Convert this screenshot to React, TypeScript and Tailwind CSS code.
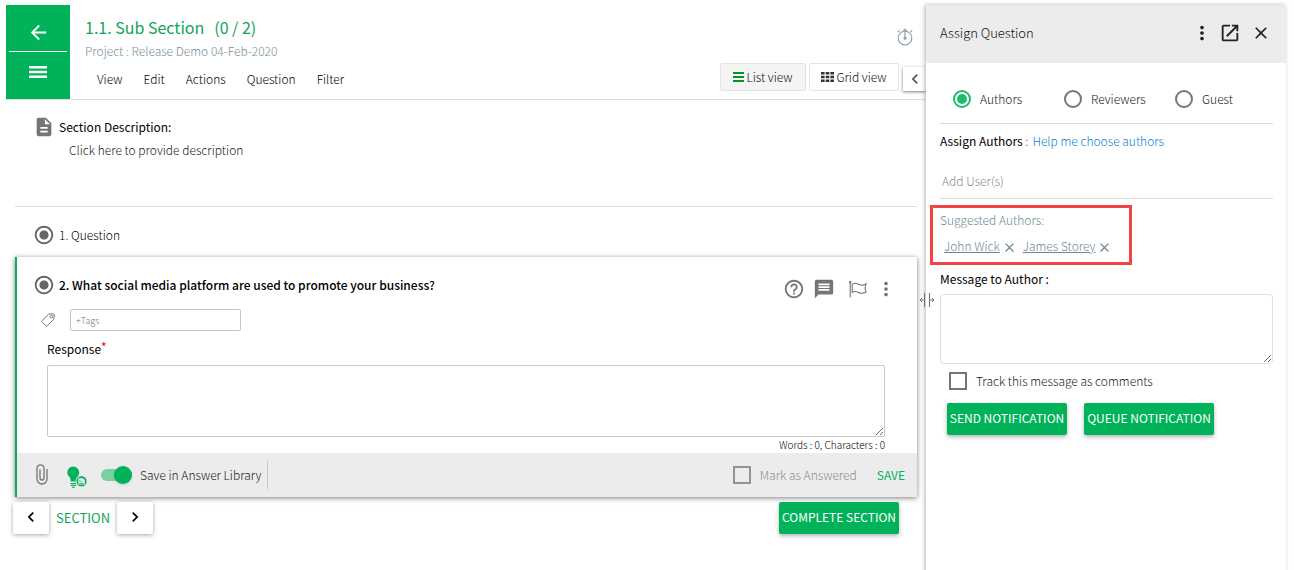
import React from 'react';
import {
  MdArrowBack,
  MdChevronLeft,
  MdChevronRight,
  MdClose,
  MdDescription,
  MdHelpOutline,
  MdMessage,
  MdMoreVert,
  MdOpenInNew,
  MdRadioButtonChecked,
} from 'react-icons/md';

const MENU_ITEMS = ['View', 'Edit', 'Actions', 'Question', 'Filter'];
const ROLES = ['Authors', 'Reviewers', 'Guest'];
const SUGGESTED = ['John Wick', 'James Storey'];

const MenuIcon = () => (
  <svg width="18" height="12" viewBox="0 0 18 12" fill="currentColor">
    <path d="M0 0h18v2.4H0zM0 4.8h18v2.4H0zM0 9.6h18V12H0z" />
  </svg>
);

const TimerIcon = () => (
  <svg width="16" height="18" viewBox="0 0 16 18" fill="none" stroke="#90a4ae" strokeWidth="1.2">
    <circle cx="8" cy="10" r="6.8" />
    <path d="M8 .8v9.4M6.3 1.8h3.4M1 4.2l1.4-1.4M15 4.2l-1.4-1.4M.8 3h2M13.2 3h2" />
    <circle cx="8" cy="10.2" r="1" fill="#90a4ae" />
  </svg>
);

const ListIcon = () => (
  <svg width="11" height="10" viewBox="0 0 11 10" fill="#0a8f2a">
    <path d="M0 0h11v2H0zM0 4h11v2H0zM0 8h11v2H0z" />
  </svg>
);

const GridIcon = () => (
  <svg width="13" height="10" viewBox="0 0 13 10" fill="#333">
    <path d="M0 0h3.6v2.6H0zM4.7 0h3.6v2.6H4.7zM9.4 0H13v2.6H9.4zM0 3.7h3.6v2.6H0zM4.7 3.7h3.6v2.6H4.7zM9.4 3.7H13v2.6H9.4zM0 7.4h3.6V10H0zM4.7 7.4h3.6V10H4.7zM9.4 7.4H13V10H9.4z" />
  </svg>
);

const TagIcon = () => (
  <svg width="14" height="14" viewBox="0 0 14 14" fill="none" stroke="#757575">
    <path d="M7.6 1.2l4.9-.4c.5 0 .8.3.8.8l-.6 4.7-6.5 6.6c-.3.3-.7.3-1 0L.9 8.8c-.3-.3-.3-.7 0-1z" />
    <circle cx="10.4" cy="3.6" r="1.3" />
  </svg>
);

const FlagIcon = () => (
  <svg width="18" height="17" viewBox="0 0 18 17" fill="none" stroke="#757575" strokeWidth="1.1">
    <path d="M1.2 1v15.5" />
    <circle cx="1.2" cy="1.2" r=".7" fill="#757575" />
    <path d="M3.2 3.2c2.2-1.4 4-1.2 6.3 0s4.6 1.6 7.6-.3c-1.3 2.8-1.3 5.6 0 8.2-3 1.6-5.4 1.5-7.6.3s-4.1-1.3-6.3 0z" />
  </svg>
);

const ClipIcon = () => (
  <svg width="12" height="21" viewBox="0 0 12 21" fill="none" stroke="#757575" strokeWidth="1.3" strokeLinecap="round">
    <path d="M11 5.5v9.5a5 5 0 0 1-10 0V4.3a3.5 3.5 0 0 1 7 0V14a2 2 0 0 1-4 0V6" />
  </svg>
);

const BulbIcon = () => (
  <svg width="20" height="22" viewBox="0 0 20 22" fill="#00b259">
    <path d="M6.2.5a6 6 0 0 1 6 6c0 1.6-.6 2.9-1.5 4.1-1 1.2-1.5 2.4-1.5 5H3.7c0-2.6-.5-3.8-1.7-5A6 6 0 0 1 6.2.5z" />
    <path d="M3.5 17h5.8v1.3H3.5zM3.8 19h5.2v1.1H3.8zM5 20.8h3v.9H5z" />
    <circle cx="14.5" cy="15.3" r="5.5" stroke="#ececec" strokeWidth=".8" />
    <path d="M11.3 12.2h4.6l1.9 1.9v4.4h-6.5z" fill="#ececec" />
    <path d="M12.2 16.9h4.6v.8h-4.6zM12.5 14l1.1.9h1.7v.7h-2.8z" />
  </svg>
);

const ResizeIcon = () => (
  <svg width="14" height="14" viewBox="0 0 14 14" fill="none" stroke="#757575">
    <path d="M4.5 0v14M9.5 0v14M0 7h3.5M10 7h3.5M2 5L0 7l2 2M12 5l2 2-2 2" />
  </svg>
);

const PRIMARY =
  'h-8 rounded-xs bg-[#00b259] pb-[2px] text-[12px] font-normal text-white shadow-[0_2px_4px_rgba(0,0,0,0.3)]';

const CHECKBOX = 'size-[18px] shrink-0 appearance-none border-2 bg-transparent checked:bg-[#00b259]';

const Header: React.FC = () => (
  <header className="flex border-b border-[#dcdcdc]">
    <nav className="flex w-16 shrink-0 flex-col bg-[#00b259] px-[3px] text-white">
      <button aria-label="Back" className="flex h-[47px] items-center justify-center border-b border-white pt-2">
        <MdArrowBack size={23} />
      </button>
      <button aria-label="Menu" className="flex h-[47px] items-center justify-center pb-2">
        <MenuIcon />
      </button>
    </nav>
    <div className="flex-1 pt-[10px] pl-[15px]">
      <h1 className="flex gap-[10px] text-[16px] leading-6 font-normal text-[#12a456]">
        <span>1.1. Sub Section</span>
        <span>(0 / 2)</span>
      </h1>
      <p className="mt-[2px] text-[12px] leading-5 text-[#78909c]">Project : Release Demo 04-Feb-2020</p>
      <div className="mt-2 flex gap-[21px] pl-3 text-[12px] leading-5 text-black">
        {MENU_ITEMS.map((item) => (
          <button key={item}>{item}</button>
        ))}
      </div>
    </div>
    <div className="flex flex-col items-end justify-between pt-[23px] pb-2">
      <button aria-label="Timer" className="mr-[13px]">
        <TimerIcon />
      </button>
      <div className="flex items-end text-[12px] text-[#111]">
        <button className="flex h-7 w-[86px] items-center justify-center gap-[2px] rounded-xs border border-[#e4e4e4] bg-[#f4f4f4]">
          <ListIcon />
          List view
        </button>
        <button className="ml-[3px] flex h-7 w-[90px] items-center justify-center gap-[2px] rounded-xs border border-[#e4e4e4]">
          <GridIcon />
          Grid view
        </button>
        <button
          aria-label="Collapse panel"
          className="ml-1 flex h-6 w-[23px] items-center justify-center bg-white text-[#555] shadow-[0_1px_3px_rgba(0,0,0,0.5)]"
        >
          <MdChevronLeft size={20} />
        </button>
      </div>
    </div>
  </header>
);

const QuestionCard: React.FC = () => (
  <section className="border-l-2 border-[#00b259] bg-white shadow-[0_1px_5px_rgba(0,0,0,0.5)]">
    <div className="pt-[18px] pr-8 pl-[30px]">
      <div className="-ml-[14px] flex h-5 items-center gap-1">
        <MdRadioButtonChecked size={22} className="text-[#666]" />
        <h2 className="flex-1 text-[12px] font-medium text-black">
          2. What social media platform are used to promote your business?
        </h2>
        <div className="-mr-3 flex items-center pt-2 text-[#757575]">
          <button aria-label="Help">
            <MdHelpOutline size={22} />
          </button>
          <button aria-label="Comments" className="ml-2">
            <MdMessage size={22} />
          </button>
          <button aria-label="Flag" className="ml-[14px]">
            <FlagIcon />
          </button>
          <button aria-label="More" className="ml-2">
            <MdMoreVert size={22} />
          </button>
        </div>
      </div>
      <div className="mt-[14px] -ml-[6px] flex items-center gap-[15px]">
        <TagIcon />
        <input
          aria-label="Tags"
          placeholder="+Tags"
          className="h-[22px] w-[171px] rounded-xs border border-[#c4c4c4] px-[5px] text-[9px] placeholder:text-[#777]"
        />
      </div>
      <label htmlFor="response" className="mt-2 flex text-[12px] leading-5 font-normal text-black">
        Response<span className="-mt-[2px] text-red-600">*</span>
      </label>
      <textarea
        id="response"
        className="mt-[6px] block h-[72px] w-full resize-y rounded-xs border border-[#c8c8c8] bg-white"
      />
      <p className="text-right text-[10px] leading-4 text-black">Words : 0, Characters : 0</p>
    </div>
    <footer className="flex h-11 items-center bg-[#ececec] pr-3 pb-px pl-[19px] text-[12px] text-[#222]">
      <button aria-label="Attach file">
        <ClipIcon />
      </button>
      <button aria-label="Suggestions" className="ml-[19px] pt-1">
        <BulbIcon />
      </button>
      <label className="ml-[14px] flex items-center gap-2">
        <input
          type="checkbox"
          role="switch"
          defaultChecked
          className="flex h-3 w-[31px] appearance-none items-center justify-start rounded-full bg-[#bbb] before:size-[18px] before:shrink-0 before:rounded-full before:bg-white before:shadow-sm checked:justify-end checked:bg-[#7bd0a2] checked:before:bg-[#00b259]"
        />
        Save in Answer Library
      </label>
      <div className="ml-[6px] h-7 w-px bg-[#c8c8c8]" />
      <label className="ml-auto flex items-center gap-[9px] text-[#8c8c8c]">
        <input type="checkbox" className={`${CHECKBOX} border-[#949494]`} />
        Mark as Answered
      </label>
      <button className="ml-5 font-normal text-[#00b259]">SAVE</button>
    </footer>
  </section>
);

const SectionPager: React.FC = () => (
  <div className="mt-[5px] flex items-center pr-[18px]">
    <button
      aria-label="Previous section"
      className="-ml-[2px] flex h-8 w-9 items-center justify-center rounded-xs bg-white pb-[2px] shadow-[0_1px_4px_rgba(0,0,0,0.35)]"
    >
      <MdChevronLeft size={20} />
    </button>
    <span className="mx-[7px] text-[13px] font-normal text-[#12a456]">SECTION</span>
    <button
      aria-label="Next section"
      className="flex h-8 w-9 items-center justify-center rounded-xs bg-white pb-[2px] shadow-[0_1px_4px_rgba(0,0,0,0.35)]"
    >
      <MdChevronRight size={20} />
    </button>
    <button className={`${PRIMARY} ml-auto w-[120px]`}>COMPLETE SECTION</button>
  </div>
);

const AssignPanel: React.FC = () => (
  <aside className="relative min-h-screen w-[360px] shrink-0 bg-white shadow-[-1px_0_4px_rgba(0,0,0,0.3)]">
    <div className="absolute top-[288px] -left-[6px]">
      <ResizeIcon />
    </div>
    <div className="flex h-[58px] items-center bg-[#ececec] pr-[15px] pb-[2px] pl-[14px] text-[#222]">
      <h2 className="flex-1 text-[13px] text-[#111]">Assign Question</h2>
      <button aria-label="More options">
        <MdMoreVert size={22} />
      </button>
      <button aria-label="Open in new window" className="ml-[6px]">
        <MdOpenInNew size={22} />
      </button>
      <button aria-label="Close" className="ml-[10px]">
        <MdClose size={20} />
      </button>
    </div>
    <div className="pr-[13px] pl-[14px] text-[12px] text-[#222]">
      <div className="grid h-[61px] grid-cols-3 items-center border-b border-[#dcdcdc] pt-3">
        {ROLES.map((role) => (
          <label key={role} className="flex items-center gap-[9px] pl-[13px]">
            <input
              type="radio"
              name="role"
              defaultChecked={role === 'Authors'}
              className="flex size-[18px] appearance-none items-center justify-center rounded-full border-2 border-[#757575] before:size-[10px] before:rounded-full checked:border-[#1fbd6b] checked:before:bg-[#1fbd6b]"
            />
            {role}
          </label>
        ))}
      </div>
      <div className="mt-[7px] flex gap-1 leading-5">
        <label htmlFor="users">
          <span className="font-normal text-black">Assign Authors</span> :
        </label>
        <a href="#help" className="text-[#0a84d8]">
          Help me choose authors
        </a>
      </div>
      <input
        id="users"
        placeholder="Add User(s)"
        className="mt-[13px] h-[35px] w-full border-b border-[#dcdcdc] px-[2px] pb-[2px] placeholder:text-[#8c8c8c]"
      />
      <div className="mt-[6px] -ml-[10px] h-[60px] w-[202px] border-3 border-[#f44343] pt-[2px] pl-[7px] text-[#6f8994]">
        <p className="leading-5">Suggested Authors:</p>
        <ul className="mt-[6px] flex gap-[6px] pl-1 leading-5">
          {SUGGESTED.map((name) => (
            <li key={name} className="flex items-center gap-[2px]">
              <a href="#author" className="underline">
                {name}
              </a>
              <button aria-label={`Remove ${name}`} className="pt-[2px]">
                <MdClose size={15} />
              </button>
            </li>
          ))}
        </ul>
      </div>
      <label htmlFor="message" className="mt-1 block leading-5 font-normal text-black">
        Message to Author :
      </label>
      <textarea
        id="message"
        className="mt-[5px] block h-[70px] w-full resize-y rounded-sm border border-[#d5e3e8] bg-white"
      />
      <label className="mt-[7px] ml-[9px] flex items-center gap-[9px] leading-5">
        <input type="checkbox" className={`${CHECKBOX} border-[#757575]`} />
        Track this message as comments
      </label>
      <div className="mt-3 ml-[7px] flex gap-[17px]">
        <button className={`${PRIMARY} w-[120px]`}>SEND NOTIFICATION</button>
        <button className={`${PRIMARY} w-[130px]`}>QUEUE NOTIFICATION</button>
      </div>
    </div>
  </aside>
);

export default function App() {
  return (
    <div className="flex h-screen overflow-hidden bg-white pt-[5px] pr-2 pl-[6px] font-['Noto_Sans_CJK_SC','Source_Sans_Pro',sans-serif] font-light">
      <main className="min-w-0 flex-1">
        <Header />
        <div className="px-[9px]">
          <section className="h-[107px] border-b border-[#dcdcdc] pt-[17px] pl-[18px] text-[12px]">
            <h2 className="flex h-5 items-center gap-1 font-normal text-black">
              <MdDescription size={22} className="text-[#757575]" />
              Section Description:
            </h2>
            <p className="mt-[3px] pl-9 leading-5 text-[#222]">Click here to provide description</p>
          </section>
          <div className="flex h-[50px] items-center gap-1 pt-[5px] pl-[18px] text-[12px] text-black">
            <MdRadioButtonChecked size={22} className="text-[#666]" />
            1. Question
          </div>
          <QuestionCard />
          <SectionPager />
        </div>
      </main>
      <AssignPanel />
    </div>
  );
}
